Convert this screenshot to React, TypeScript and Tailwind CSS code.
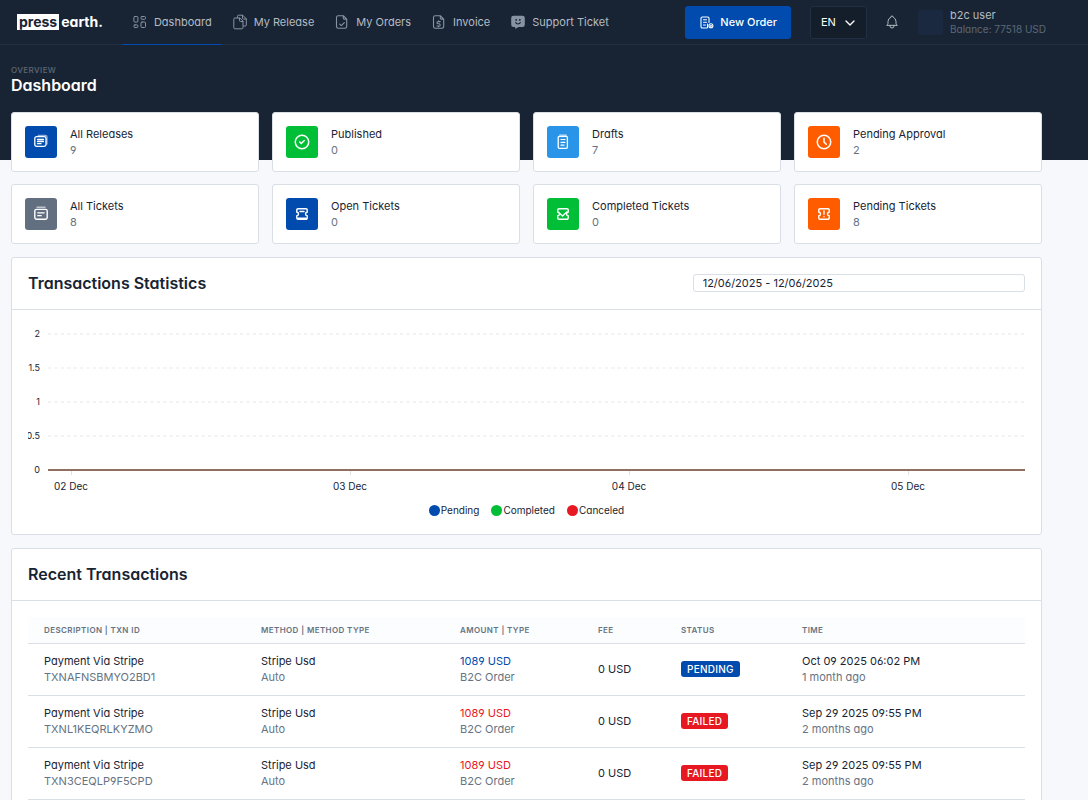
import React from 'react';
import { TbBell, TbChevronDown, TbCircleCheck, TbClock } from 'react-icons/tb';

type IconProps = { className?: string };

const stroke = {
  fill: 'none',
  stroke: 'currentColor',
  strokeLinecap: 'round',
  strokeLinejoin: 'round',
} as const;

const DashboardIcon: React.FC<IconProps> = ({ className }) => (
  <svg viewBox="0 0 16 16" className={className} {...stroke} strokeWidth="1">
    <rect x="1.9" y="2.500" width="4" height="5.600" rx="1" />
    <rect x="9" y="2.500" width="4.500" height="2.800" rx="1" />
    <rect x="1.9" y="10.900" width="4" height="2.600" rx="1" />
    <rect x="9" y="8" width="4.500" height="5.500" rx="1" />
  </svg>
);

const ReleaseIcon: React.FC<IconProps> = ({ className }) => (
  <svg viewBox="0 0 16 16" className={className} {...stroke} strokeWidth="1">
    <path d="M5.500 3.500V2.200a1 1 0 0 1 1-1h4.200l3.600 3.600V11a1 1 0 0 1-1 1h-1.500" />
    <path d="M10.500 1.400V4a1 1 0 0 0 1 1h2.700" />
    <path d="M7.500 4H3a1.200 1.200 0 0 0-1.200 1.200v8.400A1.200 1.200 0 0 0 3 14.800h6.800a1.200 1.200 0 0 0 1.200-1.200V7.500z" />
    <path d="M7.500 4.200v2.300a1 1 0 0 0 1 1h2.400" />
  </svg>
);

const fileOutline =
  'M9.300 1.700H4.200a1.700 1.700 0 0 0-1.700 1.700v9.200a1.700 1.700 0 0 0 1.700 1.700h6.800a1.700 1.700 0 0 0 1.700-1.700V5.100zM9.300 1.700v2.200a1.200 1.200 0 0 0 1.200 1.200h2.200';

const OrdersIcon: React.FC<IconProps> = ({ className }) => (
  <svg viewBox="0 0 16 16" className={className} {...stroke} strokeWidth="1.100">
    <path d={fileOutline} />
    <path d="M5.700 10.200l1.600 1.500 3-3" />
  </svg>
);

const InvoiceIcon: React.FC<IconProps> = ({ className }) => (
  <svg viewBox="0 0 16 16" className={className} {...stroke} strokeWidth="1.100">
    <path d={fileOutline} />
    <path d="M9.200 7.600H7.100a1.100 1.100 0 0 0 0 2.200h1a1.100 1.100 0 0 1 0 2.200H6M7.600 6.700v.9M7.600 12v.8" />
  </svg>
);

const SupportIcon: React.FC<IconProps> = ({ className }) => (
  <svg viewBox="0 0 16 16" className={className}>
    <path
      fill="currentColor"
      d="M3.400 1.700h9.200a2.200 2.200 0 0 1 2.200 2.200v6.900a2.200 2.200 0 0 1-2.200 2.200H8.600L5.200 15v-2H3.400a2.200 2.200 0 0 1-2.200-2.200V3.900a2.200 2.200 0 0 1 2.200-2.200z"
    />
    <circle cx="6.200" cy="5.900" r=".9" fill="#182433" />
    <circle cx="9.800" cy="5.900" r=".9" fill="#182433" />
    <path d="M5.600 8.600a2.700 2.700 0 0 0 4.800 0" {...stroke} stroke="#182433" strokeWidth="1.100" />
  </svg>
);

const NewOrderIcon: React.FC<IconProps> = ({ className }) => (
  <svg viewBox="0 0 16 16" className={className} {...stroke} strokeWidth="1.100">
    <path d="M8 14H3.300A1.300 1.300 0 0 1 2 12.700V4.300A1.300 1.300 0 0 1 3.300 3h5.400A1.300 1.300 0 0 1 10 4.300V8.500" />
    <path d="M4.500 5.700h3M4.500 8.300h3M4.500 11h2" />
    <circle cx="11.900" cy="11.800" r="2" />
    <path d="M11.900 11.200v1.200M11.300 11.800h1.200M8.500 10v3.500" />
  </svg>
);

const ReleasesIcon: React.FC<IconProps> = ({ className }) => (
  <svg viewBox="0 0 16 16" className={className} {...stroke} strokeWidth="1.300">
    <path d="M5.200 1.300h7.200a1.600 1.600 0 0 1 1.600 1.600v7.200" strokeOpacity=".55" />
    <rect x="1.800" y="2.700" width="11.200" height="9.600" rx="1.800" />
    <path d="M4.500 5.500h6M4.500 7.500h6M4.500 9.700h3.500" strokeWidth="1.300" />
  </svg>
);

const TicketsIcon: React.FC<IconProps> = ({ className }) => (
  <svg viewBox="0 0 16 16" className={className} {...stroke} strokeWidth="1.400">
    <path d="M4 1.300h8" strokeOpacity=".6" />
    <rect x="1.800" y="3.400" width="12.400" height="9.800" rx="1.600" />
    <path d="M4.800 6.800h6.400M4.800 9.700h3.400" strokeWidth="1.300" />
  </svg>
);

const DraftsIcon: React.FC<IconProps> = ({ className }) => (
  <svg viewBox="0 0 16 16" className={className} {...stroke} strokeWidth="1.300">
    <path d="M4.700 1.200h6.600" strokeOpacity=".7" />
    <rect x="3.200" y="2.300" width="9.200" height="12" rx="1.200" />
    <path d="M6 5.500h4M6 8.300h4M6 11.200h3" strokeWidth="1.200" />
  </svg>
);

const ticketOutline =
  'M4 2.700h8a1.200 1.200 0 0 1 1.200 1.200v2.400a1.700 1.700 0 0 0 0 3.400v2.400a1.200 1.200 0 0 1-1.200 1.200H4a1.200 1.200 0 0 1-1.200-1.200V9.700a1.700 1.700 0 0 0 0-3.400V3.900A1.200 1.200 0 0 1 4 2.700z';

const TicketOpenIcon: React.FC<IconProps> = ({ className }) => (
  <svg viewBox="0 0 16 16" className={className} {...stroke} strokeWidth="1.400">
    <path d={ticketOutline} />
    <path d="M6 5.500h4M3.800 12.300h8.400" />
  </svg>
);

const TicketCheckIcon: React.FC<IconProps> = ({ className }) => (
  <svg viewBox="0 0 16 16" className={className} {...stroke} strokeWidth="1.400">
    <path d={ticketOutline} />
    <path d="M4.800 7.600l2.700 2.400 4.300-4" />
  </svg>
);

const TicketAlertIcon: React.FC<IconProps> = ({ className }) => (
  <svg viewBox="0 0 16 16" className={className} {...stroke} strokeWidth="1.400">
    <path d={ticketOutline} />
    <path d="M8 5v3.200M8 10.600v.2" />
  </svg>
);

const navItems = [
  { label: 'Dashboard', icon: DashboardIcon, active: true },
  { label: 'My Release', icon: ReleaseIcon, active: false },
  { label: 'My Orders', icon: OrdersIcon, active: false },
  { label: 'Invoice', icon: InvoiceIcon, active: false },
  { label: 'Support Ticket', icon: SupportIcon, active: false },
];

const stats = [
  { label: 'All Releases', value: 9, icon: ReleasesIcon, color: 'bg-[#004bad]', size: 'size-4' },
  { label: 'Published', value: 0, icon: TbCircleCheck, color: 'bg-[#00bf36]', size: 'size-[18px]' },
  { label: 'Drafts', value: 7, icon: DraftsIcon, color: 'bg-[#2994e8]', size: 'size-4' },
  { label: 'Pending Approval', value: 2, icon: TbClock, color: 'bg-[#ff5c00]', size: 'size-[18px]' },
  { label: 'All Tickets', value: 8, icon: TicketsIcon, color: 'bg-[#626f80]', size: 'size-4' },
  { label: 'Open Tickets', value: 0, icon: TicketOpenIcon, color: 'bg-[#004bad]', size: 'size-4' },
  { label: 'Completed Tickets', value: 0, icon: TicketCheckIcon, color: 'bg-[#00bf36]', size: 'size-4' },
  { label: 'Pending Tickets', value: 8, icon: TicketAlertIcon, color: 'bg-[#ff5c00]', size: 'size-4' },
];

const gridLines = [
  { label: '2', y: 24 },
  { label: '1.5', y: 58 },
  { label: '1', y: 92 },
  { label: '0.5', y: 126 },
];

const days = [
  { label: '02 Dec', x: 43 },
  { label: '03 Dec', x: 322 },
  { label: '04 Dec', x: 601 },
  { label: '05 Dec', x: 880 },
];

const legend = [
  { label: 'Pending', color: 'bg-[#004bad]' },
  { label: 'Completed', color: 'bg-[#00bf36]' },
  { label: 'Canceled', color: 'bg-[#e81823]' },
];

const columns = [
  { label: 'Description | Txn ID', width: 'w-[217px]' },
  { label: 'Method | Method Type', width: 'w-[199px]' },
  { label: 'Amount | Type', width: 'w-[138px]' },
  { label: 'Fee', width: 'w-[83px]' },
  { label: 'Status', width: 'w-[121px]' },
  { label: 'Time', width: '' },
];

const transactions = [
  { id: 'TXNAFNSBMYO2BD1', status: 'Pending', time: 'Oct 09 2025 06:02 PM', ago: '1 month ago' },
  { id: 'TXNL1KEQRLKYZMO', status: 'Failed', time: 'Sep 29 2025 09:55 PM', ago: '2 months ago' },
  { id: 'TXN3CEQLP9F5CPD', status: 'Failed', time: 'Sep 29 2025 09:55 PM', ago: '2 months ago' },
];

const Navbar: React.FC = () => (
  <header className="flex h-[45px] items-center border-b border-[#203042] pr-[46px] pl-[17px] text-[#b4bbc4]">
    <a href="#" className="flex items-center gap-0.5 text-sm leading-4 font-bold text-white">
      <span className="bg-white px-0.5 text-[#182433]">press</span>
      <span>earth.</span>
    </a>
    <nav className="ml-[19px] flex h-full">
      {navItems.map(({ label, icon: Icon, active }) => (
        <a
          key={label}
          href="#"
          className={`-mb-px flex items-center gap-1.5 border-b px-[10px] whitespace-nowrap ${active ? 'border-[#004bad]' : 'border-transparent'}`}
        >
          <Icon className="size-4 text-[#8793a2]" />
          {label}
        </a>
      ))}
    </nav>
    <div className="ml-auto flex items-center">
      <button className="flex h-[33px] items-center gap-[5px] rounded-[3px] bg-[#004bad] px-[14px] font-medium whitespace-nowrap text-white">
        <NewOrderIcon className="size-4" />
        New Order
      </button>
      <div className="relative ml-[19px]">
        <select
          aria-label="Language"
          className="h-[33px] w-[57px] appearance-none rounded-[3px] border border-[#203042] bg-[#131e2a] pl-[10px] text-white"
        >
          <option>EN</option>
        </select>
        <TbChevronDown className="pointer-events-none absolute top-[9px] right-[9px] size-4 text-white" />
      </div>
      <button aria-label="Notifications" className="ml-[17px]">
        <TbBell className="size-4 stroke-[1.5]" />
      </button>
      <a href="#" className="ml-[18px] flex items-center gap-[7px]">
        <span className="size-[25px] rounded-[3px] bg-[#1a2940]" />
        <span className="w-[92px] whitespace-nowrap">
          <span className="block leading-[14px]">b2c user</span>
          <span className="block text-[10px] leading-[14px] text-[#5d6876]">Balance: 77518 USD</span>
        </span>
      </a>
    </div>
  </header>
);

const TransactionsChart: React.FC = () => (
  <section className="rounded-[3px] border border-[#dadfe5] bg-white">
    <div className="flex h-[52px] items-center justify-between border-b border-[#dadfe5] px-4 pb-0.5">
      <h2 className="text-base font-semibold">Transactions Statistics</h2>
      <input
        aria-label="Date range"
        defaultValue="12/06/2025 - 12/06/2025"
        className="h-[18px] w-1/3 rounded-[3px] border border-[#dadfe5] px-[9px]"
      />
    </div>
    <div className="px-4 pb-4">
      <svg viewBox="0 0 997 192" className="block w-full" fontSize="9" fill="#182433">
        {gridLines.map(({ label, y }) => (
          <g key={label}>
            <text x="12" y={y + 3} textAnchor="end">{label}</text>
            <line x1="20" x2="997" y1={y} y2={y} stroke="#e6e7e9" strokeDasharray="3.2 3.2" />
          </g>
        ))}
        <text x="12" y="163" textAnchor="end">0</text>
        {days.map(({ label, x }) => (
          <g key={label}>
            <line x1={x + 0.5} x2={x + 0.5} y1="161" y2="165" stroke="#e0e0e0" />
            <text x={x} y="180" textAnchor="middle" fontSize="10">{label}</text>
          </g>
        ))}
        <line x1="20" x2="997" y1="160" y2="160" stroke="#8f6f61" strokeWidth="2" />
      </svg>
      <ul className="flex justify-center gap-3 text-[10px] leading-4">
        {legend.map(({ label, color }) => (
          <li key={label} className="flex items-center gap-px">
            <span className={`size-[11px] rounded-full ${color}`} />
            {label}
          </li>
        ))}
      </ul>
    </div>
  </section>
);

const RecentTransactions: React.FC = () => (
  <section className="rounded-[3px] border border-[#dadfe5] bg-white">
    <div className="flex h-[52px] items-center border-b border-[#dadfe5] px-4 pb-0.5">
      <h2 className="text-base font-semibold">Recent Transactions</h2>
    </div>
    <div className="p-4">
      <table className="w-full table-fixed text-left">
        <thead>
          <tr className="h-[26px] border-b border-[#dadfe5] bg-[#fcfdfe] text-[8px] tracking-wider text-[#667382] uppercase">
            {columns.map(({ label, width }) => (
              <th key={label} className={`px-4 font-semibold ${width}`}>{label}</th>
            ))}
          </tr>
        </thead>
        <tbody>
          {transactions.map(({ id, status, time, ago }) => (
            <tr key={id} className="h-[52px] border-b border-[#dadfe5]">
              <td className="px-4">
                <div>Payment Via Stripe</div>
                <div className="text-[#667382]">{id}</div>
              </td>
              <td className="px-4">
                <div>Stripe Usd</div>
                <div className="text-[#667382]">Auto</div>
              </td>
              <td className="px-4">
                <div className={status === 'Pending' ? 'text-[#004bad]' : 'text-[#e81823]'}>1089 USD</div>
                <div className="text-[#667382]">B2C Order</div>
              </td>
              <td className="px-4 whitespace-nowrap">0 USD</td>
              <td className="px-4">
                <span
                  className={`inline-block rounded-[3px] px-1.5 text-[10px] font-medium tracking-wide text-white uppercase ${status === 'Pending' ? 'bg-[#004bad]' : 'bg-[#e81823]'}`}
                >
                  {status}
                </span>
              </td>
              <td className="px-4">
                <div>{time}</div>
                <div className="text-[#667382]">{ago}</div>
              </td>
            </tr>
          ))}
        </tbody>
      </table>
    </div>
  </section>
);

const App: React.FC = () => (
  <div className="min-h-screen bg-[#f6f8fb] font-['Inter',sans-serif] text-[11px] leading-4 text-[#182433] [font-feature-settings:'cv03','cv04','cv11']">
    <div className="bg-[#182433]">
      <Navbar />
      <div className="px-[11px] pt-5 pb-[65px] text-white">
        <div className="text-[8px] leading-[10px] font-medium tracking-wider text-[#5d6876] uppercase">Overview</div>
        <h1 className="text-base leading-5 font-semibold">Dashboard</h1>
      </div>
    </div>
    <main className="-mt-12 flex flex-col gap-[13px] pr-[46px] pl-[11px]">
      <div className="grid grid-cols-4 gap-x-[13px] gap-y-3">
        {stats.map(({ label, value, icon: Icon, color, size }) => (
          <div key={label} className="flex h-[60px] items-center gap-[13px] rounded-[3px] border border-[#dadfe5] bg-white px-[13px]">
            <span className={`flex size-8 items-center justify-center rounded-[3px] text-white ${color}`}>
              <Icon className={size} />
            </span>
            <div>
              <div>{label}</div>
              <div className="text-[#667382]">{value}</div>
            </div>
          </div>
        ))}
      </div>
      <TransactionsChart />
      <RecentTransactions />
    </main>
  </div>
);

export default App;
